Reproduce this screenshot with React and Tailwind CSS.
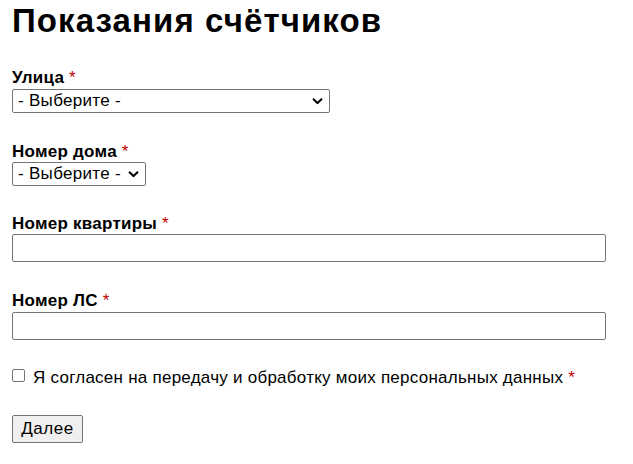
import { useState } from 'react'

function Chevron() {
  return (
    <svg width="11" height="7" viewBox="0 0 11 7" className="pointer-events-none absolute right-[7px] top-1/2 -translate-y-1/2">
      <path d="M1 1.2 L5.5 5.5 L10 1.2" fill="none" stroke="#000" strokeWidth="2" />
    </svg>
  )
}

function Req() {
  return <span className="text-[#c00000] font-normal"> *</span>
}

function Select({ width }) {
  return (
    <div className={`relative ${width}`}>
      <select className="w-full h-[24px] appearance-none border border-[#767676] rounded-[2px] bg-white pl-[5px] pr-[20px] text-[17px] leading-[20px] tracking-[0.3px] text-black">
        <option>- Выберите -</option>
      </select>
      <Chevron />
    </div>
  )
}

const labelCls = 'block text-[17px] leading-[20px] tracking-[0.25px] font-bold'
const inputCls = 'w-[594px] h-[28px] border border-[#767676] rounded-[2px] bg-white px-[3px] text-[17px]'

export default function App() {
  const [agree, setAgree] = useState(false)

  return (
    <div className="bg-white min-h-[464px] pl-[12px] text-black" style={{ fontFamily: '"Liberation Sans", Arial, sans-serif' }}>
      <h1 className="pt-[2px] text-[33px] leading-[38px] tracking-[1.1px] font-bold">Показания счётчиков</h1>

      <form className="flex flex-col">
        <label className={`mt-[28px] mb-[1px] ${labelCls}`}>Улица<Req /></label>
        <Select width="w-[318px]" />

        <label className={`mt-[29px] ${labelCls}`}>Номер дома<Req /></label>
        <Select width="w-[134px]" />

        <label className={`mt-[28px] ${labelCls}`}>Номер квартиры<Req /></label>
        <input className={inputCls} />

        <label className={`mt-[29px] mb-[1px] ${labelCls}`}>Номер ЛС<Req /></label>
        <input className={inputCls} />

        <label className="mt-[28px] flex items-start gap-[8px] text-[17px] leading-[20px] tracking-[0.25px]">
          <input
            type="checkbox"
            checked={agree}
            onChange={(e) => setAgree(e.target.checked)}
            className="mt-[1px] w-[13px] h-[13px] shrink-0 appearance-none border border-[#767676] rounded-[2px] bg-white checked:bg-[#0075ff]"
          />
          <span>Я согласен на передачу и обработку моих персональных данных<Req /></span>
        </label>

        <div className="mt-[27px]">
          <button type="button" className="w-[71px] h-[28px] border border-[#767676] rounded-[2px] bg-[#efefef] text-[17px] leading-[20px] tracking-[0.5px]">
            Далее
          </button>
        </div>
      </form>
    </div>
  )
}
